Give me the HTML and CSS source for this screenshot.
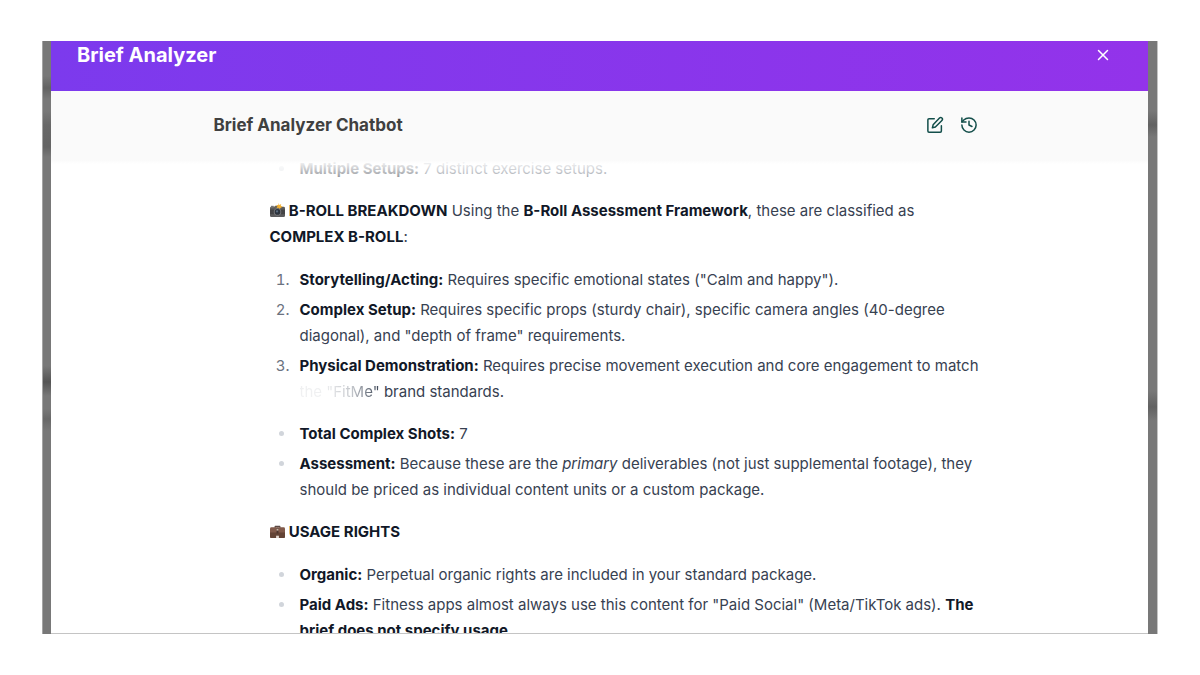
FILE: index.html
```html
<!DOCTYPE html>
<html lang="en">
<head>
    <meta charset="UTF-8">
    <meta name="viewport" content="width=device-width, initial-scale=1.0">
    <title>Brief Analyzer</title>
    <link rel="stylesheet" href="styles.css">
</head>
<body>

<div class="backdrop">
    <div class="modal" role="dialog" aria-labelledby="modalTitle">

        <!-- Modal Header -->
        <header class="modal-header">
            <h1 id="modalTitle">Brief Analyzer</h1>
            <button class="close-btn" type="button" aria-label="Close">
                <svg viewBox="0 0 24 24"><path d="M18 6 6 18"/><path d="m6 6 12 12"/></svg>
            </button>
        </header>

        <!-- Chat Header -->
        <div class="chat-header">
            <div class="chat-bar">
                <h2>Brief Analyzer Chatbot</h2>
                <div class="chat-actions">
                    <button class="icon-btn" type="button" aria-label="New chat">
                        <svg viewBox="0 0 24 24"><path d="M11 3.500H4a1.500 1.500 0 0 0-1.500 1.500v15A1.500 1.500 0 0 0 4 21.500h15a1.500 1.500 0 0 0 1.500-1.500v-7"/><path d="M18 2.700a2.200 2.200 0 0 1 3.200 3.200L12.500 14.800 8.500 15.800l1-4z"/></svg>
                    </button>
                    <button class="icon-btn" type="button" aria-label="Chat history">
                        <svg viewBox="0 0 24 24"><path d="M2.500 12a9.500 9.500 0 1 0 9.500-9.500 10 10 0 0 0-7 2.900L2.500 8"/><path d="M2.500 2.500V8H8"/><path d="M12 7v5l4 2"/></svg>
                    </button>
                </div>
            </div>
        </div>

        <!-- Messages -->
        <main class="messages">
            <div class="message">
                <ul>
                    <li><strong>Multiple Setups:</strong> 7 distinct exercise setups.</li>
                </ul>

                <p>
                    <svg class="emoji" viewBox="0 0 16 16" aria-hidden="true">
                        <rect x="0" y="4" width="16" height="11" rx="1.5" fill="#5b5b5d"/>
                        <rect x="0" y="7" width="16" height="5" fill="#444446"/>
                        <path d="M4 5 5.500 3h5L12 5z" fill="#6d6558"/>
                        <rect x="1" y="3" width="3" height="2" fill="#777"/>
                        <circle cx="8" cy="9.500" r="4" fill="#77777a"/>
                        <circle cx="8" cy="9.500" r="3" fill="#2c333d"/>
                        <circle cx="7.500" cy="9" r="1.200" fill="#596b80"/>
                        <path d="m9 0 1 2 2-1-.5 2 2 1-2 1-1 1.500L9 5 7 5.500 8 3.500 6.500 2 9 2z" fill="#f5b335"/>
                    </svg>
                    <strong>B-ROLL BREAKDOWN</strong> Using the <strong>B-Roll Assessment Framework</strong>, these are classified as <strong>COMPLEX B-ROLL</strong>:
                </p>

                <ol>
                    <li><strong>Storytelling/Acting:</strong> Requires specific emotional states ("Calm and happy").</li>
                    <li><strong>Complex Setup:</strong> Requires specific props (sturdy chair), specific camera angles (40-degree diagonal), and "depth of frame" requirements.</li>
                    <li><strong>Physical Demonstration:</strong> Requires precise movement execution and core engagement to match <span class="fade-in">the "FitMe"</span> brand standards.</li>
                </ol>

                <ul>
                    <li><strong>Total Complex Shots:</strong> 7</li>
                    <li><strong>Assessment:</strong> Because these are the <em>primary</em> deliverables (not just supplemental footage), they should be priced as individual content units or a custom package.</li>
                </ul>

                <p>
                    <svg class="emoji" viewBox="0 0 16 16" aria-hidden="true">
                        <path d="M5.500 4V2.500h5V4" fill="none" stroke="#5b4a45" stroke-width="1.200"/>
                        <rect x="0" y="3.500" width="16" height="11.500" rx="1.500" fill="#80594a"/>
                        <path d="M0 9h16v4.500a1.500 1.500 0 0 1-1.500 1.500h-13A1.500 1.500 0 0 1 0 13.500z" fill="#634335"/>
                        <rect x="7" y="4" width="2" height="6" fill="#4b342c"/>
                        <rect x="7" y="5" width="2" height="2" fill="#cbb9a8"/>
                        <rect x="6.500" y="12.500" width="3" height="2.500" fill="#e3d8d0"/>
                    </svg>
                    <strong>USAGE RIGHTS</strong>
                </p>

                <ul>
                    <li><strong>Organic:</strong> Perpetual organic rights are included in your standard package.</li>
                    <li><strong>Paid Ads:</strong> Fitness apps almost always use this content for "Paid Social" (Meta/TikTok ads). <strong>The brief does not specify usage.</strong></li>
                </ul>
            </div>
        </main>
    </div>
</div>

</body>
</html>
```
FILE: styles.css
```css
* {
    margin: 0;
    padding: 0;
    box-sizing: border-box;
}

body {
    font-family: Inter, "Liberation Sans", sans-serif;
    background: #fff;
    color: #374151;
    height: 100vh;
    padding: 41px 42px;
}

/* Dimmed page behind the modal */
.backdrop {
    height: 100%;
    padding: 0 9px 0 8px;
    border-right: 1px solid #c4c4c4;
    border-left: 1px solid #a4a4a4;
    background:
        linear-gradient(transparent 35px, #626262 47px, transparent 58px, transparent 70px, #686868 84px, #646464 106px, transparent 116px, transparent 325px, #545454 341px, transparent 355px, transparent 368px, #686868 378px, transparent 390px) left / 8px 100% no-repeat,
        linear-gradient(transparent 70px, #626262 84px, transparent 96px, transparent 350px, #626262 366px, transparent 380px) right / 9px 100% no-repeat,
        #787878;
}

.modal {
    display: flex;
    flex-direction: column;
    height: 100%;
    background: #fff;
    border-bottom: 1px solid #c4c4c4;
    overflow: hidden;
}

.modal-header {
    display: flex;
    flex-shrink: 0;
    justify-content: space-between;
    align-items: center;
    padding: 0 36px 22px 26px;
    background: linear-gradient(90deg, #7c3aed, #9333ea);
    color: #fff;
}

.modal-header h1 {
    font-size: 20px;
    line-height: 28px;
    font-weight: 700;
}

button {
    display: flex;
    border: none;
    background: none;
    cursor: pointer;
}

svg {
    fill: none;
    stroke: currentColor;
    stroke-width: 2;
    stroke-linecap: round;
    stroke-linejoin: round;
}

.close-btn {
    color: #fff;
}

.close-btn svg {
    width: 18px;
    height: 18px;
}

.chat-header {
    position: relative;
    flex-shrink: 0;
    padding: 0 24px;
    background: #fafafa;
}

.chat-header::after {
    content: "";
    position: absolute;
    top: 100%;
    left: 0;
    right: 0;
    height: 36px;
    background: linear-gradient(#fafafa 4px, rgba(255, 255, 255, 0.9) 8px, rgba(255, 255, 255, 0.6) 20px, rgba(255, 255, 255, 0));
}

.chat-bar {
    display: flex;
    justify-content: space-between;
    align-items: center;
    max-width: 772px;
    height: 65px;
    margin: 0 auto;
    padding-top: 3px;
}

.chat-bar h2 {
    font-size: 17px;
    line-height: 28px;
    font-weight: 700;
    color: #404040;
}

.chat-actions {
    display: flex;
}

.icon-btn {
    padding: 8px;
    color: #134e4a;
}

.icon-btn svg {
    width: 18px;
    height: 18px;
}

.messages {
    flex: 1;
    min-height: 0;
    padding: 0 24px;
    overflow: hidden;
}

.message {
    max-width: 772px;
    margin: 0 auto;
    padding-left: 56px;
    font-size: 15px;
    line-height: 26px;
}

.message p {
    margin-bottom: 17px;
}

.message ul,
.message ol {
    margin-bottom: 16px;
}

.message ul {
    padding-left: 26px;
}

.message ol {
    padding-left: 24px;
}

.message ul li {
    padding-left: 4px;
}

.message ol li {
    padding-left: 6px;
}

.message li + li {
    margin-top: 4px;
}

.message ul li::marker {
    color: #d1d5db;
}

.message ol li::marker {
    color: #6b7280;
}

.message strong {
    font-weight: 700;
    color: #111827;
}

.emoji {
    width: 15px;
    height: 15px;
    stroke: none;
    vertical-align: -2px;
}

/* Words still being revealed */
.fade-in {
    background: linear-gradient(90deg, rgba(55, 65, 81, 0.08) 30%, rgba(55, 65, 81, 0.3) 65%, #374151);
    background-clip: text;
    -webkit-background-clip: text;
    color: transparent;
}
```
